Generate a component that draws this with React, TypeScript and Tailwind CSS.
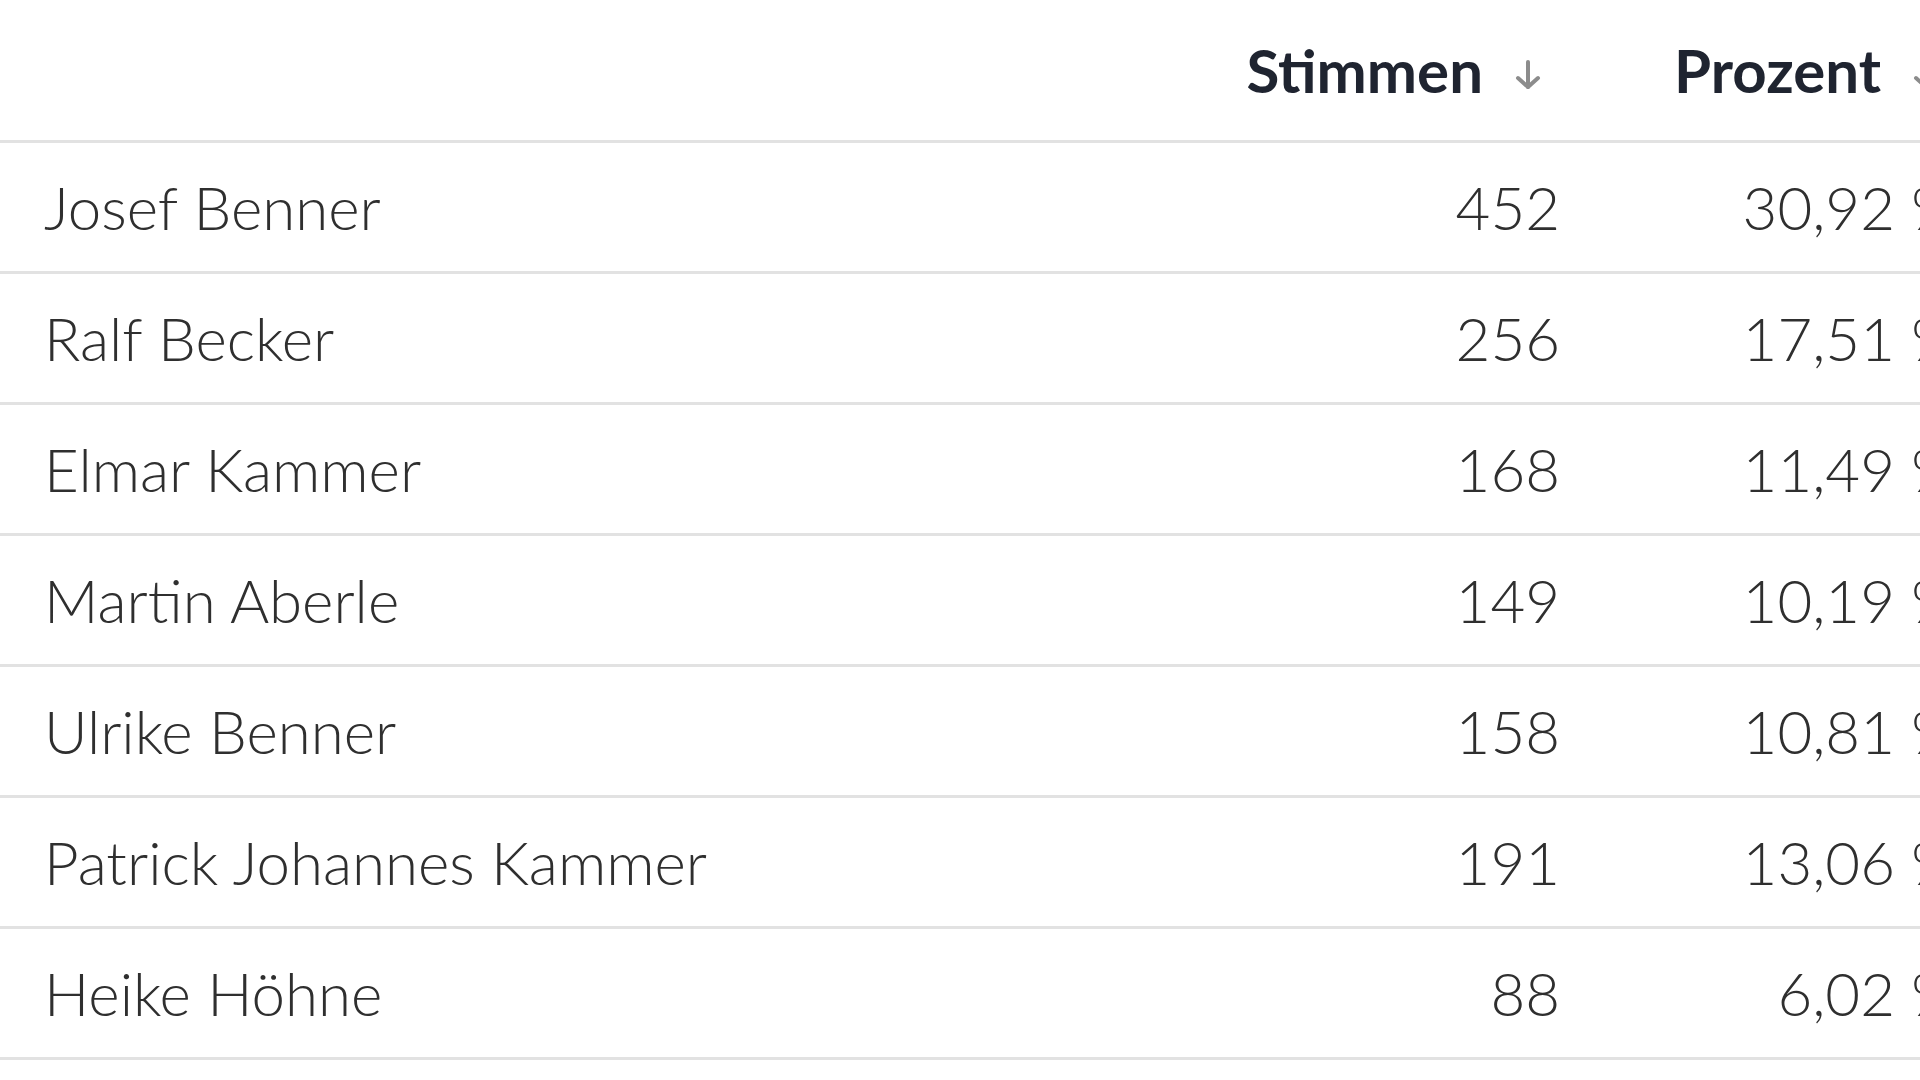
const ROWS = [
  { name: 'Josef Benner', votes: 452, pct: '30,92' },
  { name: 'Ralf Becker', votes: 256, pct: '17,51' },
  { name: 'Elmar Kammer', votes: 168, pct: '11,49' },
  { name: 'Martin Aberle', votes: 149, pct: '10,19' },
  { name: 'Ulrike Benner', votes: 158, pct: '10,81' },
  { name: 'Patrick Johannes Kammer', votes: 191, pct: '13,06' },
  { name: 'Heike Höhne', votes: 88, pct: '6,02' },
]

function SortArrow() {
  return (
    <svg viewBox="0 0 30 32" className="mt-[10px] h-[32px] w-[30px] text-[#8c8c8c]" fill="none" stroke="currentColor" strokeWidth={4} strokeLinecap="round" strokeLinejoin="round">
      <path d="M15 3v25" />
      <path d="M5 19l10 9 10-9" />
    </svg>
  )
}

export default function App() {
  return (
    <div className="h-[1080px] w-full overflow-hidden bg-white font-['Lato','Open_Sans',sans-serif] text-[#2f2f2f]">
      <div className="w-[1970px]">
        <div className="grid h-[143px] grid-cols-[1200px_380px_390px] items-center border-b-[3px] border-[#e2e2e2]">
          <div />
          <div className="flex items-center justify-end gap-[30px] pr-[37px] text-[60px] font-bold text-[#1f2430]">
            Stimmen
            <SortArrow />
          </div>
          <div className="flex items-center justify-end gap-[30px] pr-[29px] text-[60px] font-bold text-[#1f2430]">
            Prozent
            <SortArrow />
          </div>
        </div>
        {ROWS.map((r) => (
          <div
            key={r.name}
            className="grid h-[131px] grid-cols-[1200px_380px_390px] items-center border-b-[3px] border-[#e2e2e2] text-[60px] font-light"
          >
            <div className="pl-[44px]">{r.name}</div>
            <div className="pr-[20px] text-right">{r.votes}</div>
            <div className="pr-[12px] text-right">{r.pct} %</div>
          </div>
        ))}
      </div>
    </div>
  )
}
